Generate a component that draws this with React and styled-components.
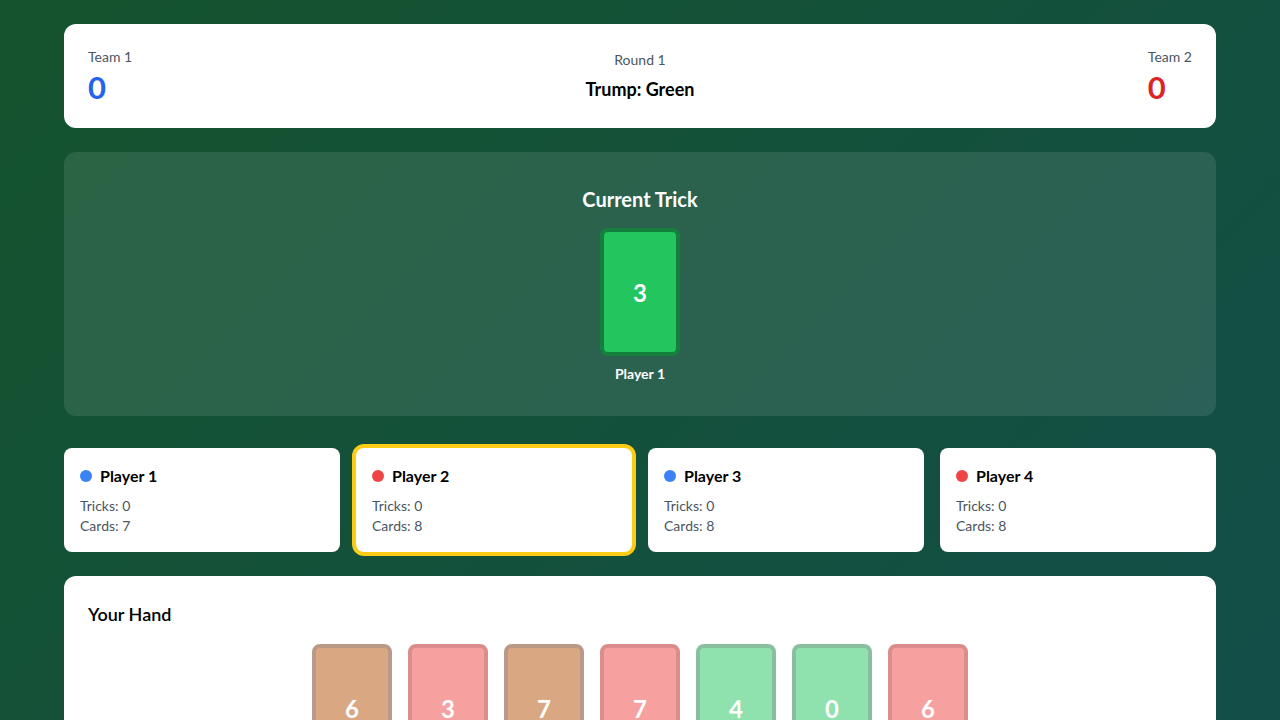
import styled, { createGlobalStyle } from "styled-components";

const GlobalStyle = createGlobalStyle`
  * { box-sizing: border-box; }
  html, body {
    margin: 0;
    padding: 0;
    font-family: "Segoe UI", Lato, "Noto Sans", sans-serif;
    background: linear-gradient(135deg, #14532d 0%, #134e4a 100%);
    min-height: 100vh;
  }
`;

const COLORS = {
  red: { bg: "#ef4444", border: "#b91c1c" },
  green: { bg: "#22c55e", border: "#15803d" },
  brown: { bg: "#b45309", border: "#78350f" },
};

const Page = styled.div`
  max-width: 1200px;
  margin: 0 auto;
  padding: 24px;
  display: flex;
  flex-direction: column;
`;

const ScoreBar = styled.div`
  background: #fff;
  border-radius: 12px;
  padding: 24px;
  height: 104px;
  display: flex;
  justify-content: space-between;
  align-items: center;
  margin-bottom: 24px;
`;

const TeamBox = styled.div`
  display: flex;
  flex-direction: column;
  align-items: flex-start;
`;

const Label = styled.div`
  font-size: 14px;
  line-height: 20px;
  color: #4b5563;
`;

const Score = styled.div`
  margin-top: 2px;
  font-size: 31px;
  line-height: 36px;
  font-weight: 700;
  color: ${(p) => p.color};
`;

const RoundBox = styled.div`
  display: flex;
  flex-direction: column;
  align-items: center;
  gap: 5px;
`;

const Trump = styled.div`
  font-size: 18px;
  line-height: 28px;
  font-weight: 700;
  color: #000;
`;

const TrickArea = styled.div`
  background: rgba(255, 255, 255, 0.1);
  border-radius: 12px;
  padding: 32px;
  height: 264px;
  display: flex;
  flex-direction: column;
  align-items: center;
  margin-bottom: 32px;
`;

const TrickTitle = styled.h2`
  margin: 1px 0 15px;
  font-size: 20px;
  line-height: 28px;
  font-weight: 700;
  color: #fff;
`;

const TrickSlot = styled.div`
  display: flex;
  flex-direction: column;
  align-items: center;
  gap: 8px;
`;

const Card = styled.div`
  width: 80px;
  height: 128px;
  border-radius: 8px;
  border: 4px solid ${(p) => COLORS[p.suit].border};
  background: ${(p) => COLORS[p.suit].bg};
  opacity: ${(p) => (p.dim ? 0.5 : 1)};
  display: flex;
  align-items: center;
  justify-content: center;
  color: #fff;
  font-size: 24px;
  font-weight: 700;
  flex-shrink: 0;
`;

const SlotName = styled.div`
  font-size: 14px;
  line-height: 20px;
  font-weight: 700;
  color: #fff;
`;

const Players = styled.div`
  display: grid;
  grid-template-columns: repeat(4, 1fr);
  gap: 16px;
  margin-bottom: 24px;
`;

const PlayerCard = styled.div`
  background: #fff;
  border-radius: 8px;
  padding: 16px;
  height: 104px;
  box-shadow: ${(p) => (p.active ? "0 0 0 4px #facc15" : "none")};
`;

const PlayerHead = styled.div`
  display: flex;
  align-items: center;
  gap: 8px;
  margin-bottom: 8px;
`;

const Dot = styled.span`
  width: 12px;
  height: 12px;
  border-radius: 50%;
  background: ${(p) => p.color};
`;

const PlayerName = styled.div`
  font-size: 16px;
  line-height: 24px;
  font-weight: 700;
  color: #000;
`;

const Stat = styled.div`
  font-size: 14px;
  line-height: 20px;
  color: #4b5563;
`;

const HandPanel = styled.div`
  background: #fff;
  border-radius: 12px;
  padding: 24px;
  height: 200px;
`;

const HandTitle = styled.h3`
  margin: 0 0 16px;
  font-size: 18px;
  line-height: 28px;
  font-weight: 600;
  color: #000;
`;

const HandRow = styled.div`
  display: flex;
  justify-content: center;
  gap: 16px;
`;

const players = [
  { name: "Player 1", team: "#3b82f6", tricks: 0, cards: 7 },
  { name: "Player 2", team: "#ef4444", tricks: 0, cards: 8, active: true },
  { name: "Player 3", team: "#3b82f6", tricks: 0, cards: 8 },
  { name: "Player 4", team: "#ef4444", tricks: 0, cards: 8 },
];

const hand = [
  { suit: "brown", value: 6 },
  { suit: "red", value: 3 },
  { suit: "brown", value: 7 },
  { suit: "red", value: 7 },
  { suit: "green", value: 4 },
  { suit: "green", value: 0 },
  { suit: "red", value: 6 },
];

const App = () => {
  return (
    <>
      <GlobalStyle />
      <Page>
        <ScoreBar>
          <TeamBox>
            <Label>Team 1</Label>
            <Score color="#2563eb">0</Score>
          </TeamBox>
          <RoundBox>
            <Label>Round 1</Label>
            <Trump>Trump: Green</Trump>
          </RoundBox>
          <TeamBox>
            <Label>Team 2</Label>
            <Score color="#dc2626">0</Score>
          </TeamBox>
        </ScoreBar>

        <TrickArea>
          <TrickTitle>Current Trick</TrickTitle>
          <TrickSlot>
            <Card suit="green">3</Card>
            <SlotName>Player 1</SlotName>
          </TrickSlot>
        </TrickArea>

        <Players>
          {players.map((p) => (
            <PlayerCard key={p.name} active={p.active}>
              <PlayerHead>
                <Dot color={p.team} />
                <PlayerName>{p.name}</PlayerName>
              </PlayerHead>
              <Stat>Tricks: {p.tricks}</Stat>
              <Stat>Cards: {p.cards}</Stat>
            </PlayerCard>
          ))}
        </Players>

        <HandPanel>
          <HandTitle>Your Hand</HandTitle>
          <HandRow>
            {hand.map((c, i) => (
              <Card key={i} suit={c.suit} dim>
                {c.value}
              </Card>
            ))}
          </HandRow>
        </HandPanel>
      </Page>
    </>
  );
};

export default App;
